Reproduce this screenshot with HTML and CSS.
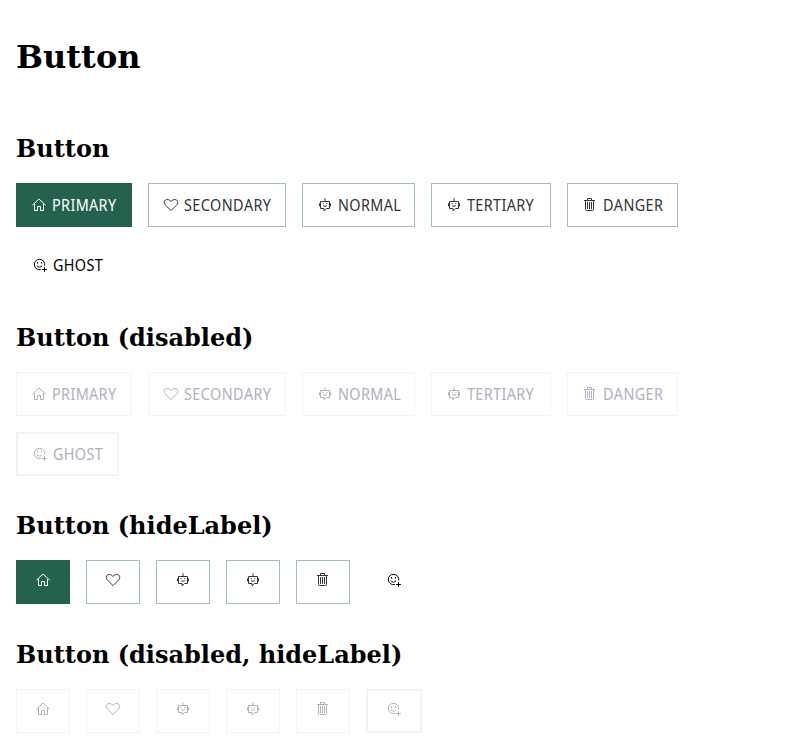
FILE: index.html
```html
<!DOCTYPE html>
<html lang="en">
<head>
<meta charset="utf-8">
<title>Button</title>
<link rel="stylesheet" href="styles.css">
</head>
<body>
<svg class="sprite" aria-hidden="true">
  <symbol id="home" viewBox="0 0 16 16"><path d="M1.400 8.200 8 2l6.600 6.200M3.500 7v6.500h3v-4h3v4h3V7"/></symbol>
  <symbol id="heart" viewBox="0 0 16 16"><path d="M8 13.600 2.200 7.800C-.2 5 2.300 1.700 5.300 2.600 6.500 2.900 7.300 3.700 8 4.500c.7-.8 1.500-1.600 2.700-1.900 3-.9 5.500 2.400 3.100 5.200z"/></symbol>
  <symbol id="robot" viewBox="0 0 16 16"><path d="M3.500 4.500h9v7H9.500l-2.500 2.300v-2.300H3.500zM8 1.200v3.300M2.500 6.300v3M13.500 6.300v3M6.200 6v1M9.800 6v1M6 8.300c.3 1.200 3.700 1.200 4 0"/></symbol>
  <symbol id="trash" viewBox="0 0 16 16"><path d="M2 3.500h11M5.500 3.500v-2h4v2M3.500 3.500v9q0 1 1 1h6q1 0 1-1v-9M5.500 5v7M7.500 5v7M9.500 5v7"/></symbol>
  <symbol id="smile" viewBox="0 0 16 16"><path d="M8.800 12.500A5.200 5.200 0 1 1 12.600 8.500M5.500 5v1.600M9.500 5v1.600M4.800 8.700c1.100 1.900 4.200 1.900 5.300 0M12.500 10.100v4.800M10.100 12.500h4.800"/></symbol>
</svg>
<main>
  <h1>Button</h1>
  <section>
    <h2>Button</h2>
    <div class="row">
      <button class="btn primary"><svg><use href="#home"/></svg><span>PRIMARY</span></button>
      <button class="btn secondary"><svg><use href="#heart"/></svg><span>SECONDARY</span></button>
      <button class="btn normal"><svg><use href="#robot"/></svg><span>NORMAL</span></button>
      <button class="btn tertiary"><svg><use href="#robot"/></svg><span>TERTIARY</span></button>
      <button class="btn danger"><svg><use href="#trash"/></svg><span>DANGER</span></button>
      <button class="btn ghost"><svg><use href="#smile"/></svg><span>GHOST</span></button>
    </div>
  </section>
  <section>
    <h2>Button (disabled)</h2>
    <div class="row">
      <button class="btn primary" disabled><svg><use href="#home"/></svg><span>PRIMARY</span></button>
      <button class="btn secondary" disabled><svg><use href="#heart"/></svg><span>SECONDARY</span></button>
      <button class="btn normal" disabled><svg><use href="#robot"/></svg><span>NORMAL</span></button>
      <button class="btn tertiary" disabled><svg><use href="#robot"/></svg><span>TERTIARY</span></button>
      <button class="btn danger" disabled><svg><use href="#trash"/></svg><span>DANGER</span></button>
      <button class="btn ghost" disabled><svg><use href="#smile"/></svg><span>GHOST</span></button>
    </div>
  </section>
  <section>
    <h2>Button (hideLabel)</h2>
    <div class="row">
      <button class="btn primary icon-only"><svg><use href="#home"/></svg></button>
      <button class="btn secondary icon-only"><svg><use href="#heart"/></svg></button>
      <button class="btn normal icon-only"><svg><use href="#robot"/></svg></button>
      <button class="btn tertiary icon-only"><svg><use href="#robot"/></svg></button>
      <button class="btn danger icon-only"><svg><use href="#trash"/></svg></button>
      <button class="btn ghost icon-only"><svg><use href="#smile"/></svg></button>
    </div>
  </section>
  <section>
    <h2>Button (disabled, hideLabel)</h2>
    <div class="row">
      <button class="btn primary icon-only" disabled><svg><use href="#home"/></svg></button>
      <button class="btn secondary icon-only" disabled><svg><use href="#heart"/></svg></button>
      <button class="btn normal icon-only" disabled><svg><use href="#robot"/></svg></button>
      <button class="btn tertiary icon-only" disabled><svg><use href="#robot"/></svg></button>
      <button class="btn danger icon-only" disabled><svg><use href="#trash"/></svg></button>
      <button class="btn ghost icon-only" disabled><svg><use href="#smile"/></svg></button>
    </div>
  </section>
</main>
</body>
</html>
```
FILE: styles.css
```css
* { box-sizing: border-box; }
body {
  margin: 0;
  background: #fff;
  color: #000;
  font-family: "DejaVu Serif", serif;
}
.sprite { display: none; }
main { padding: 38px 16px 0; }
h1 { margin: 0 0 22.3px; font-size: 32px; line-height: 38px; }
section { padding-top: 36.6px; }
h2 { margin: 0 0 20.1px; font-size: 24px; line-height: 28px; }
.row { display: flex; flex-wrap: wrap; gap: 16px; width: 700px; }
.btn {
  display: flex;
  align-items: center;
  gap: 5px;
  height: 44px;
  padding: 0 0 0 14px;
  border: 1px solid #a3c0b6;
  border-radius: 0;
  background: #fff;
  color: #333;
  font: 16px/24px "Noto Sans", sans-serif;
  font-kerning: none;
  letter-spacing: 0.4px;
}
.btn svg {
  flex: none;
  width: 16px;
  height: 16px;
  fill: none;
  stroke: currentColor;
  stroke-width: 1;
}
.btn span {
  padding-top: 1px;
  white-space: nowrap;
  transform: scaleX(0.9);
  transform-origin: left center;
}
.primary { width: 116px; background: #24614f; border-color: #24614f; color: #fff; }
.secondary { width: 138px; }
.normal { width: 113px; padding-left: 13.5px; }
.tertiary { width: 120px; }
.danger { width: 111px; }
.ghost { width: 103px; border: 2px solid transparent; color: #000; }
.btn:disabled { background: #fff; border-color: #f3f3f3; color: #b0b0bd; }
.icon-only { width: 54px; padding: 0 0 4px; justify-content: center; }
.ghost.icon-only { width: 56px; }
```
